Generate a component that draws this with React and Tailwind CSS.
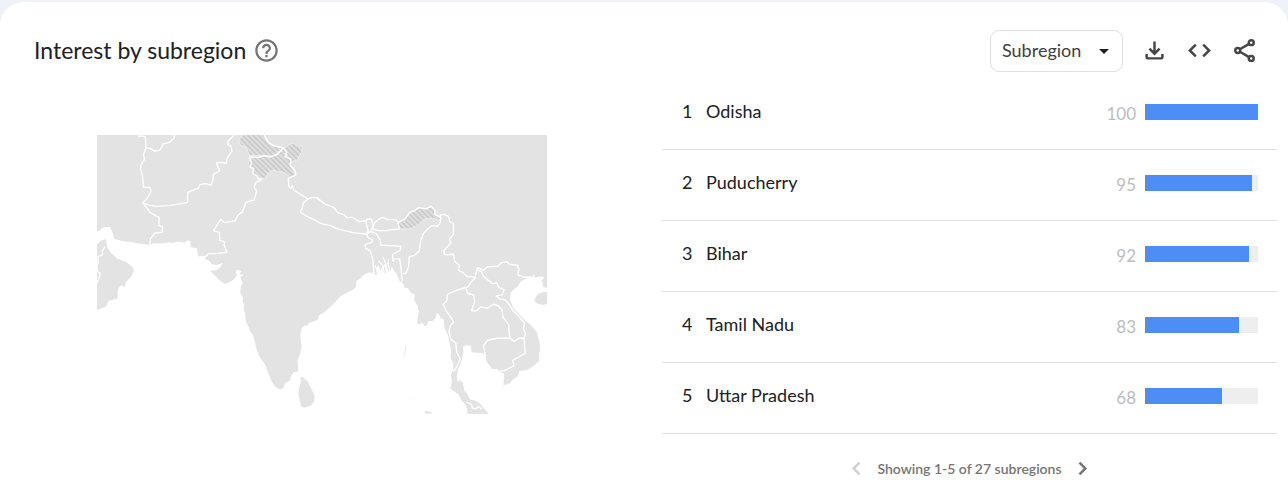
import { MdArrowDropDown, MdHelpOutline } from 'react-icons/md'

const REGIONS = [
  { rank: 1, name: 'Odisha', value: 100 },
  { rank: 2, name: 'Puducherry', value: 95 },
  { rank: 3, name: 'Bihar', value: 92 },
  { rank: 4, name: 'Tamil Nadu', value: 83 },
  { rank: 5, name: 'Uttar Pradesh', value: 68 },
]

// Water is painted over a land-coloured rectangle
const SEA = `M10 324 L22 318 38 307 58 306 63 320 70 342 86 346 100 350 122 351 140 356 160 357 175 361 188 355
  210 356 235 352 243 354 262 350 280 353 290 347 298 348 300 368 318 370 321 394 334 394 348 392 341 402 356 408
  362 418 376 420 396 414 388 428 376 436 358 437 368 449 385 465 402 477 417 471 430 463 438 450 440 462 436 445
  434 437 443 435 452 439 445 447 459 450 448 457 452 465 455 475 450 485 448 504 456 517 455 531 460 540 458 550
  463 565 464 588 474 607 478 621 487 632 491 650 499 680 508 699 522 717 532 745 540 765 552 785 567 795 578 789
  582 775 598 766 601 752 610 741 622 740 620 705 628 687 632 670 630 650 628 630 632 610 641 602 648 603 654 594
  680 585 684 572 700 562 720 545 750 513 789 493 796 484 795 470 808 461 818 450 835 442 845 446 843 438 850 449
  858 450 856 432 862 421 868 436 872 448 870 426 877 440 885 446 883 419 890 434 897 442 903 424 910 438 918 447
  926 468 937 476 940 487 952 491 961 504 972 509 969 524 980 542 984 560 978 596 990 598 992 590 1001 604 1009 600
  1012 588 1024 589 1034 580 1038 563 1044 568 1050 581 1059 584 1061 610 1072 632 1076 656 1081 675 1079 700
  1086 712 1088 732 1080 750 1083 770 1079 791 1090 800 1102 808 1113 828 1124 838 1129 850 1130 870 10 870 10 555
  18 555 40 547 46 545 52 528 80 521 80 495 90 480 100 486 106 470 119 458 130 436 120 422 100 408 80 402 62 386
  50 370 44 342 30 347 18 358 10 358Z
  M1197 870 L1180 852 1167 835 1150 826 1138 824 1128 806 1120 796 1116 774 1108 766 1100 769 1098 757 1102 732
  1112 708 1118 682 1117 664 1128 661 1141 663 1142 682 1175 684 1184 695 1188 711 1196 721 1203 732 1220 732
  1224 740 1240 746 1238 782 1258 774 1266 764 1281 755 1285 738 1310 735 1330 722 1345 708 1344 688 1348 674
  1346 652 1338 622 1320 600 1301 585 1285 568 1268 550 1264 540 1257 522 1260 502 1273 491 1282 483 1290 470
  1308 461 1325 456 1327 448 1332 458 1350 454 1361 458 1353 466 1358 487 1380 492 1380 870Z`

const ISLANDS = [
  'M628 755 L638 758 650 770 658 785 671 812 670 830 660 842 640 849 630 844 626 825 622 805 625 788 630 770Z',
  'M1332 522 L1341 507 1360 501 1380 500 1380 533 1358 540 1338 536 1332 529Z',
  'M1001 867 L1003 858 1018 861 1026 867Z',
  'M944 662 L946 664 943 684 937 702 941 680Z',
  'M932 732 L934 732 933 735Z',
  'M965 820 L969 823 967 825Z',
]

const BORDERS = [
  'M140 33 L163 34 165 68 158 88 160 103 150 120 149 132 155 155 157 186 178 188 180 200 167 222 155 233',
  'M165 68 L178 70 190 78 205 76 213 67 215 57 236 52 250 38 250 28',
  'M155 233 L172 240 195 244 235 242 268 237 290 232 290 202 308 195 322 190 328 178 345 176 360 181 366 165 367 148 386 138 376 114 390 112 405 115 409 100 423 78 420 64 410 58 412 48 430 30',
  'M155 233 L178 263 205 278 203 302 215 305 213 322 190 325 178 342 176 360',
  'M512 165 L495 172 490 188 497 197 490 225 465 232 455 260 442 270 432 288 400 293 390 283 378 300 368 318 386 322 386 346 400 350 400 362 408 382 375 386 352 386 338 402',
  'M615 150 L592 160 594 185 601 190 604 182 609 196 627 207 652 222 638 233 634 248 628 262 650 275 675 287 690 296 720 302 740 312 765 318 790 324 826 328 832 318 825 290 828 283 842 283 846 300 844 312 838 320 828 328 832 338 845 345 843 352 823 358 824 370 838 378 845 400 850 448',
  'M652 222 L664 217 678 218 700 236 728 247 742 264 760 270 768 278 784 277 806 290 826 287',
  'M845 312 L850 295 862 284 876 277 890 284 914 284 922 292 925 312 885 317 862 317Z',
  'M838 320 L855 325 868 344 870 361 900 362 930 364 928 376 905 388 906 408 912 402 926 402 930 425 934 470',
  'M922 292 L940 284 958 262 970 258 983 248 1006 252 1020 244 1032 255 1032 268 1050 278 1048 292 1041 304 1022 302 998 325 990 345 985 378 970 392 955 395 953 425 946 445 936 446',
  'M1050 282 L1048 270 1060 268 1073 274 1076 288 1088 297 1088 328 1076 342 1080 354 1058 378 1062 390 1088 388 1092 410 1106 422 1102 436 1117 443 1130 456 1142 454 1152 460 1158 434 1172 440 1178 454 1192 466 1204 476 1218 474 1224 488 1240 494 1234 510 1216 513 1228 523 1242 524 1255 538 1265 555 1278 568 1294 586 1301 594 1298 610 1304 626 1300 640 1284 640 1270 650 1258 640 1220 640 1190 646 1178 663 1184 695',
  'M1158 434 L1160 428 1178 436 1190 426 1222 424 1230 414 1248 410 1256 418 1280 421 1284 432 1281 450 1300 457 1322 457',
  'M1152 460 L1140 472 1132 486 1118 490 1098 496 1070 508 1068 528 1057 538 1066 558 1082 580 1088 592 1080 600 1074 620 1080 642 1095 656 1098 682 1108 702 1098 726 1088 740',
  'M1125 488 L1130 505 1148 510 1152 530 1142 558 1156 558 1170 546 1190 550 1208 538 1222 542 1234 556 1236 576 1254 600 1255 628 1258 640',
  'M1300 640 L1303 685 1288 694 1266 706 1270 722 1240 738 1225 738',
  'M1126 832 L1142 838 1145 850 1156 852 1162 844 1172 852',
  'M42 365 L34 378 34 390 20 396 22 412 17 425 20 440 28 446 22 465 17 478',
]

// River mouths of the Ganges delta
const RIVERS = [
  'M876 396 L884 414 888 440',
  'M864 408 L874 420 880 440',
  'M893 402 L892 418 898 438',
  'M886 416 L874 430 868 444',
  'M852 422 L860 436 862 448',
]

const DISPUTED = [
  'M443 45 L457 28 520 28 532 52 548 62 576 68 560 88 540 94 500 92 476 92 466 68 448 60Z',
  'M476 95 L500 98 520 92 540 96 578 69 588 82 584 96 602 104 598 122 615 150 598 158 580 142 545 136 532 144 522 160 508 160 488 146 482 128 472 120Z',
  'M580 72 L595 58 608 54 620 62 635 66 632 82 618 106 600 110 588 90Z',
  'M922 292 L940 284 958 262 970 258 983 248 1006 252 1020 244 1032 255 1032 268 1050 278 1044 288 1030 280 1000 282 982 300 960 312 925 312Z',
]

const DISPUTED_LINES = [
  'M518 28 L532 52 548 62 578 69 560 88 540 96 520 92 500 98 476 95 482 112 478 126 488 130 486 146 498 152 502 162 514 162',
  'M578 69 L588 82 582 95 600 102 598 122 612 135 615 150',
]

function RegionMap() {
  return (
    <svg viewBox="18 30 1353 837" className="block w-[70%]" role="img" aria-label="Map of subregions">
      <defs>
        <pattern id="hatch" width="11" height="11" patternUnits="userSpaceOnUse" patternTransform="rotate(-45)">
          <rect width="11" height="11" fill="#dfdfdf" />
          <rect width="5" height="11" fill="#cacaca" />
        </pattern>
      </defs>
      <rect x="18" y="30" width="1353" height="837" fill="#e3e3e3" />
      {DISPUTED.map((d) => (
        <path key={d} d={d} fill="url(#hatch)" stroke="#ededed" strokeWidth="3" />
      ))}
      <g fill="none" stroke="#fff" strokeWidth="4" strokeLinejoin="round">
        {[...BORDERS, ...DISPUTED_LINES, ...RIVERS].map((d) => (
          <path key={d} d={d} />
        ))}
      </g>
      <path d={SEA} fill="#fff" />
      {ISLANDS.map((d) => (
        <path key={d} d={d} fill="#e3e3e3" />
      ))}
    </svg>
  )
}

function LineIcon({ children }) {
  return (
    <svg viewBox="0 0 24 24" className="size-[27px]" fill="none" stroke="currentColor" strokeWidth="2.2" aria-hidden="true">
      {children}
    </svg>
  )
}

function IconButton({ label, children }) {
  return (
    <button type="button" aria-label={label} className="flex size-[45px] items-center justify-center">
      <LineIcon>{children}</LineIcon>
    </button>
  )
}

function RegionRow({ rank, name, value }) {
  return (
    <tr className="h-[71px] *:border-b *:border-[#dfdfdf]">
      <td className="w-11 pb-[6px] pl-5 text-[#202124]">{rank}</td>
      <td className="pb-[6px] text-[#202124]">{name}</td>
      <td className="w-16 pr-[9px] pb-px text-right text-[17px] text-[#bdbdbd]">{value}</td>
      <td className="w-[132px] pr-[19px] pb-1">
        <div className="h-4 bg-[#eeeeee]">
          <div className="h-full bg-[#4c8df6]" style={{ width: `${value}%` }} />
        </div>
      </td>
    </tr>
  )
}

export default function App() {
  return (
    <div className="flex min-h-screen flex-col bg-[#eff3f9] pt-[2px] font-['Lato',sans-serif]">
      <section className="flex-1 rounded-t-[24px] bg-white">
        <header className="flex items-center justify-between pt-[26px] pr-[21px] pl-[34px]">
          <div className="flex items-center gap-[7px]">
            <h2 className="pb-[2px] text-[23px] leading-7 text-[#202124]">Interest by subregion</h2>
            <button type="button" aria-label="Help" className="text-[#757575]">
              <MdHelpOutline className="size-[27px]" />
            </button>
          </div>
          <div className="flex items-center text-[#444746]">
            <label className="relative mr-[9px] flex items-center">
              <select
                aria-label="Resolution"
                className="h-[42px] w-[133px] appearance-none rounded-[9px] border border-[#dfdfdf] bg-white pl-[11px] text-[18px] text-[#3c4043]"
              >
                <option>Subregion</option>
              </select>
              <MdArrowDropDown className="pointer-events-none absolute right-[7px] size-6 text-[#202124]" />
            </label>
            <IconButton label="Download">
              <path d="M12 4v11M7.5 10.3l4.5 4.5 4.5-4.5M5 15v3q0 1 1 1h12q1 0 1-1v-3" />
            </IconButton>
            <IconButton label="Embed">
              <path d="M8.7 6.7L3.4 12l5.3 5.3M15.3 6.7l5.3 5.3-5.3 5.3" />
            </IconButton>
            <IconButton label="Share">
              <circle cx="18" cy="5" r="2.2" />
              <circle cx="6" cy="12" r="2.2" />
              <circle cx="18" cy="19" r="2.2" />
              <path d="M7.9 10.9l8.2-4.8M7.9 13.1l8.2 4.8" />
            </IconButton>
          </div>
        </header>

        <div className="grid grid-cols-2">
          <div className="flex items-start justify-center pt-[62px]">
            <RegionMap />
          </div>
          <div className="pt-[6px] pr-[11px] pl-[18px]">
            <table
              className="w-full border-separate border-spacing-0 text-[18px] leading-6"
              aria-label="Interest by subregion"
            >
              <tbody>
                {REGIONS.map((region) => (
                  <RegionRow key={region.rank} {...region} />
                ))}
              </tbody>
            </table>
            <nav className="flex items-center justify-center gap-[7px] pt-[21px] text-[#757575]">
              <button type="button" aria-label="Previous" disabled className="text-[#d0d0d0]">
                <LineIcon>
                  <path d="M14.7 6.7L9.4 12l5.3 5.3" />
                </LineIcon>
              </button>
              <span className="text-[14px] leading-5 font-semibold">Showing 1-5 of 27 subregions</span>
              <button type="button" aria-label="Next">
                <LineIcon>
                  <path d="M9.3 6.7l5.3 5.3-5.3 5.3" />
                </LineIcon>
              </button>
            </nav>
          </div>
        </div>
      </section>
    </div>
  )
}
